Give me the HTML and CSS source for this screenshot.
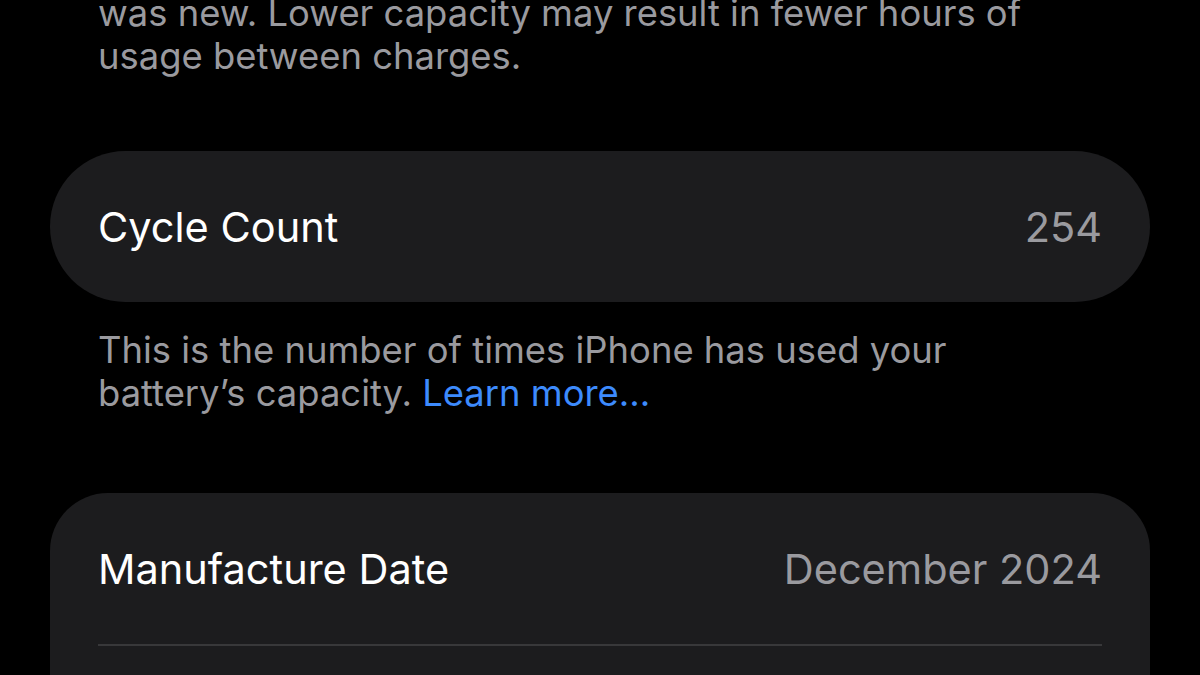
FILE: index.html
```html
<!DOCTYPE html>
<html lang="en">
<head>
    <meta charset="UTF-8">
    <meta name="viewport" content="width=device-width, initial-scale=1.0">
    <title>Battery Health</title>
    <link rel="stylesheet" href="styles.css">
</head>
<body>

<div class="screen">
    <p class="footnote footnote-top">was new. Lower capacity may result in fewer hours of<br>usage between charges.</p>

    <div class="group single">
        <div class="row">
            <span class="row-label">Cycle Count</span>
            <span class="row-value">254</span>
        </div>
    </div>

    <p class="footnote">This is the number of times iPhone has used your<br>battery’s capacity. <a class="link" href="#">Learn more...</a></p>

    <div class="group open">
        <div class="row divided">
            <span class="row-label">Manufacture Date</span>
            <span class="row-value">December 2024</span>
        </div>
    </div>
</div>

</body>
</html>
```

FILE: styles.css
```css
body {
    margin: 0;
    background-color: #000;
    font-family: Inter, "Noto Sans", sans-serif;
    overflow: hidden;
}

.screen {
    width: 1200px;
    height: 675px;
    padding: 0 50px;
    box-sizing: border-box;
    overflow: hidden;
}

.footnote {
    margin: 27px 0 0;
    padding: 0 48px;
    font-size: 36.4px;
    line-height: 43px;
    color: #9a9a9f;
}

.footnote-top {
    margin-top: -8px;
}

.link {
    color: #3d8bfd;
    text-decoration: none;
}

.group {
    margin-top: 78px;
    background-color: #1c1c1e;
    border-radius: 58px;
    padding: 0 48px;
}

.group.single {
    margin-top: 73px;
    border-radius: 76px;
}

/* card keeps going below the fold */
.group.open {
    padding-bottom: 120px;
}

.row {
    display: flex;
    justify-content: space-between;
    align-items: center;
    height: 151px;
    font-size: 41.5px;
}

.row.divided {
    border-bottom: 2px solid #38383a;
}

.row-label {
    color: #fff;
}

.row-value {
    color: #9a9a9f;
}
```
